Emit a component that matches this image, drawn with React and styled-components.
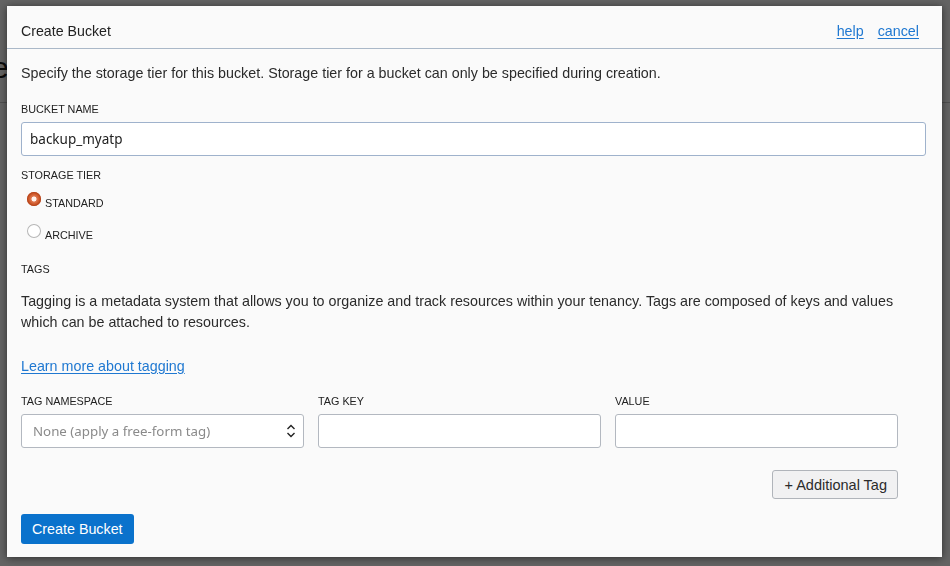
import React from "react";
import styled, { createGlobalStyle } from "styled-components";

const GlobalStyle = createGlobalStyle`
  html, body { margin: 0; padding: 0; }
  body {
    background: #ffffff;
    font-family: "Liberation Sans", Arial, sans-serif;
    overflow: hidden;
  }
  * { box-sizing: border-box; }
`;

/* underlying page (dimmed by the overlay) */
const Page = styled.div`
  width: 950px;
  height: 566px;
`;

const PageHeader = styled.div`
  height: 103px;
  padding-top: 50px;
  border-bottom: 1px solid #c9c9c9;
`;

const PageTitle = styled.h1`
  margin: 0 0 0 -8px;
  font-family: "Liberation Sans", Arial, sans-serif;
  font-weight: 400;
  font-size: 30px;
  line-height: 36px;
  color: #1a1a1a;
`;

/* overlay + dialog */
const Overlay = styled.div`
  position: fixed;
  inset: 0;
  background: rgba(0, 0, 0, 0.61);
  padding: 6px 0 0 7px;
  display: flex;
  align-items: flex-start;
`;

const Dialog = styled.div`
  width: 935px;
  height: 551px;
  background: #fafafa;
  box-shadow: 0 1px 8px rgba(0, 0, 0, 0.55);
  display: flex;
  flex-direction: column;
`;

const DialogHeader = styled.div`
  display: flex;
  align-items: center;
  justify-content: space-between;
  padding: 15px 23px 7px 14px;
  border-bottom: 1px solid #aab8c8;
`;

const DialogTitle = styled.h2`
  margin: 0;
  font-size: 14.2px;
  font-weight: 400;
  line-height: 20px;
  color: #222;
`;

const HeaderLinks = styled.div`
  display: flex;
  gap: 14px;
`;

const Link = styled.a`
  font-size: 14.3px;
  line-height: 20px;
  color: #1f78d1;
  text-decoration: underline;
  text-underline-offset: 2px;
  cursor: pointer;
`;

const DialogBody = styled.div`
  padding: 0 16px 11px 14px;
  display: flex;
  flex-direction: column;
  align-items: flex-start;
`;

const Text = styled.p`
  margin: ${(p) => p.$mt || 0}px 0 0;
  font-size: 14.3px;
  line-height: ${(p) => p.$lh || 20}px;
  color: #2b2b2b;
  width: ${(p) => p.$w || 905}px;
`;

const FieldLabel = styled.label`
  display: block;
  margin-top: ${(p) => p.$mt || 0}px;
  font-size: 10.8px;
  line-height: 14px;
  text-transform: uppercase;
  color: #222;
`;

const TextInput = styled.input`
  display: block;
  width: ${(p) => p.$w}px;
  height: 34px;
  margin-top: 6px;
  padding: 0 8px;
  border: 1px solid ${(p) => (p.$active ? "#9fb2cc" : "#b3b8c0")};
  border-radius: 3px;
  background: #fff;
  font-family: "Noto Sans", "Open Sans", sans-serif;
  font-size: 13.5px;
  color: #222;
  outline: none;
  caret-color: #222;
`;

const RadioGroup = styled.div`
  margin-top: 10px;
  display: flex;
  flex-direction: column;
  gap: 14px;
`;

const RadioRow = styled.label`
  display: flex;
  align-items: flex-start;
  gap: 4px;
  padding-left: 6px;
  cursor: pointer;
`;

const RadioCircle = styled.span`
  width: 14px;
  height: 14px;
  border-radius: 50%;
  flex: none;
  ${(p) =>
    p.$checked
      ? `background: radial-gradient(circle at 50% 50%, #fff3ee 0 2.2px, #e07a52 2.8px, #cf5a2c 5px, #bf4d22 7px);
         box-shadow: inset 0 0 0 1px #b9471d;`
      : `background: #fff;
         box-shadow: inset 0 0 0 1px #b6b6b6;`}
`;

const RadioText = styled.span`
  padding-top: 4px;
  font-size: 10.8px;
  line-height: 14px;
  text-transform: uppercase;
  color: #222;
`;

const TagGrid = styled.div`
  margin-top: 18px;
  display: grid;
  grid-template-columns: repeat(3, 283px);
  column-gap: 14px;
`;

const TagField = styled.div`
  display: flex;
  flex-direction: column;
`;

const SelectWrap = styled.div`
  position: relative;
  margin-top: 6px;
  width: 283px;
  height: 34px;
`;

const Select = styled.select`
  appearance: none;
  -webkit-appearance: none;
  width: 100%;
  height: 100%;
  padding: 0 28px 0 11px;
  border: 1px solid #b3b8c0;
  border-radius: 3px;
  background: #fff;
  font-family: "Noto Sans", "Open Sans", sans-serif;
  font-size: 13.3px;
  color: #8a8a8a;
  outline: none;
`;

const SelectIcon = styled.svg`
  position: absolute;
  right: 8px;
  top: 10px;
  pointer-events: none;
`;

const ActionRow = styled.div`
  width: 877px;
  margin-top: 22px;
  display: flex;
  justify-content: flex-end;
`;

const SecondaryButton = styled.button`
  height: 29px;
  padding: 0 10px 0 11px;
  border: 1px solid #b0b4ba;
  border-radius: 3px;
  background: #f1f1f2;
  font-family: "Liberation Sans", Arial, sans-serif;
  font-size: 14.5px;
  color: #2b2b2b;
  cursor: pointer;
`;

const PrimaryButton = styled.button`
  margin-top: 15px;
  height: 30px;
  padding: 0 11px;
  border: none;
  border-radius: 3px;
  background: #0a72cc;
  font-family: "Liberation Sans", Arial, sans-serif;
  font-size: 14.3px;
  color: #fff;
  cursor: pointer;
`;

export default function App() {
  return (
    <>
      <GlobalStyle />
      <Page>
        <PageHeader>
          <PageTitle>e</PageTitle>
        </PageHeader>
      </Page>
      <Overlay>
        <Dialog>
          <DialogHeader>
            <DialogTitle>Create Bucket</DialogTitle>
            <HeaderLinks>
              <Link>help</Link>
              <Link>cancel</Link>
            </HeaderLinks>
          </DialogHeader>
          <DialogBody>
            <Text $mt={14}>
              Specify the storage tier for this bucket. Storage tier for a bucket can only be specified during creation.
            </Text>
            <FieldLabel $mt={19}>Bucket Name</FieldLabel>
            <TextInput $w={905} $active defaultValue="backup_myatp" autoFocus />
            <FieldLabel $mt={12}>Storage Tier</FieldLabel>
            <RadioGroup>
              <RadioRow>
                <RadioCircle $checked />
                <RadioText>Standard</RadioText>
              </RadioRow>
              <RadioRow>
                <RadioCircle />
                <RadioText>Archive</RadioText>
              </RadioRow>
            </RadioGroup>
            <FieldLabel $mt={20}>Tags</FieldLabel>
            <Text $mt={15} $lh={21} $w={890}>
              Tagging is a metadata system that allows you to organize and track resources within your tenancy. Tags are composed of keys and values which can be attached to resources.
            </Text>
            <Text $mt={23}>
              <Link>Learn more about tagging</Link>
            </Text>
            <TagGrid>
              <TagField>
                <FieldLabel>Tag Namespace</FieldLabel>
                <SelectWrap>
                  <Select defaultValue="none">
                    <option value="none">None (apply a free-form tag)</option>
                  </Select>
                  <SelectIcon width="10" height="14" viewBox="0 0 10 14">
                    <path d="M1.5 5 L5 1.5 L8.5 5" fill="none" stroke="#222" strokeWidth="1.4" />
                    <path d="M1.5 9 L5 12.5 L8.5 9" fill="none" stroke="#222" strokeWidth="1.4" />
                  </SelectIcon>
                </SelectWrap>
              </TagField>
              <TagField>
                <FieldLabel>Tag Key</FieldLabel>
                <TextInput $w={283} />
              </TagField>
              <TagField>
                <FieldLabel>Value</FieldLabel>
                <TextInput $w={283} />
              </TagField>
            </TagGrid>
            <ActionRow>
              <SecondaryButton>+ Additional Tag</SecondaryButton>
            </ActionRow>
            <PrimaryButton>Create Bucket</PrimaryButton>
          </DialogBody>
        </Dialog>
      </Overlay>
    </>
  );
}
